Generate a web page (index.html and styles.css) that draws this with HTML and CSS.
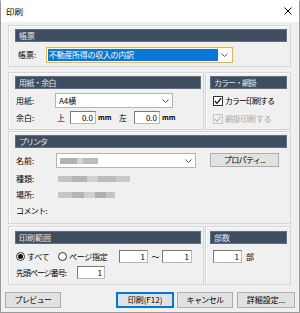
FILE: index.html
```html
<!DOCTYPE html>
<html lang="ja">
<head>
<meta charset="utf-8">
<title>印刷</title>
<link rel="stylesheet" href="styles.css">
</head>
<body>
<div class="window">
  <div class="titlebar">
    <span class="title">印刷</span>
    <svg class="close" width="8" height="8" viewBox="0 0 8 8"><path d="M0.5 0.5 L7.5 7.5 M7.5 0.5 L0.5 7.5" stroke="#000" stroke-width="1" fill="none"/></svg>
  </div>
  <div class="content">
    <section class="panel p-form">
      <div class="hdr">帳票</div>
      <div class="row r-form">
        <span class="lbl l-form">帳票:</span>
        <div class="combo focus">
          <span class="sel">不動産所得の収入の内訳</span>
          <span class="arrow"><svg width="7" height="4" viewBox="0 0 7 4"><path d="M0.5 0.5 L3.5 3.5 L6.5 0.5" stroke="#555" fill="none"/></svg></span>
        </div>
      </div>
    </section>

    <div class="pair r2">
      <section class="panel p-paper">
        <div class="hdr t-m">用紙・余白</div>
        <div class="row r-paper">
          <span class="lbl l-paper">用紙:</span>
          <div class="combo c-paper">
            <span class="val">A4横</span>
            <span class="arrow"><svg width="7" height="4" viewBox="0 0 7 4"><path d="M0.5 0.5 L3.5 3.5 L6.5 0.5" stroke="#555" fill="none"/></svg></span>
          </div>
        </div>
        <div class="row r-margin">
          <span class="lbl l-paper">余白:</span>
          <span class="side s-top">上</span>
          <span class="num n-margin">0.0</span>
          <span class="unit">mm</span>
          <span class="side s-left">左</span>
          <span class="num n-margin n-left">0.0</span>
          <span class="unit">mm</span>
        </div>
      </section>
      <section class="panel p-side">
        <div class="hdr hdr-side t-l">カラー・網掛</div>
        <div class="chk c1">
          <span class="box"><svg width="8" height="8" viewBox="0 0 8 8"><path d="M0.8 4 L3 6.3 L7.2 1.2" stroke="#000" stroke-width="1.1" fill="none"/></svg></span>
          <span class="t-l">カラー印刷する</span>
        </div>
        <div class="chk c2 disabled">
          <span class="box"><svg width="8" height="8" viewBox="0 0 8 8"><path d="M0.8 4 L3 6.3 L7.2 1.2" stroke="#bcbcbc" stroke-width="1.1" fill="none"/></svg></span>
          <span class="t-s">網掛印刷する</span>
        </div>
      </section>
    </div>

    <section class="panel p-printer">
      <div class="hdr t-l">プリンタ</div>
      <div class="row r-name">
        <span class="lbl l-info">名前:</span>
        <div class="combo c-name">
          <span class="val"><span class="blur b-name"></span></span>
          <span class="arrow"><svg width="7" height="4" viewBox="0 0 7 4"><path d="M0.5 0.5 L3.5 3.5 L6.5 0.5" stroke="#555" fill="none"/></svg></span>
        </div>
        <button class="btn b-prop t-m">プロパティ...</button>
      </div>
      <div class="row r-info r-first">
        <span class="lbl l-val">種類:</span>
        <span class="blur b-kind"></span>
      </div>
      <div class="row r-info">
        <span class="lbl l-val">場所:</span>
        <span class="blur b-place"></span>
      </div>
      <div class="row r-info">
        <span class="lbl l-val t-m">コメント:</span>
      </div>
    </section>

    <div class="pair r4">
      <section class="panel p-range">
        <div class="hdr hdr-low">印刷範囲</div>
        <div class="row r-radio">
          <span class="radio on"></span>
          <span class="rtext t-all t-s">すべて</span>
          <span class="radio r-page"></span>
          <span class="rtext t-page t-s">ページ指定</span>
          <span class="num n-from">1</span>
          <span class="tilde">～</span>
          <span class="num n-to">1</span>
        </div>
        <div class="row r-start">
          <span class="lbl l-start t-l">先頭ページ番号:</span>
          <span class="num n-start">1</span>
        </div>
      </section>
      <section class="panel p-side">
        <div class="hdr hdr-side hdr-low">部数</div>
        <div class="row r-copies">
          <span class="num n-copies">1</span>
          <span class="unit-bu">部</span>
        </div>
      </section>
    </div>

    <div class="buttons">
      <button class="btn b-preview t-m">プレビュー</button>
      <button class="btn b-print">印刷(F12)</button>
      <button class="btn b-cancel t-m">キャンセル</button>
      <button class="btn b-detail">詳細設定...</button>
    </div>
  </div>
</div>
</body>
</html>
```

FILE: styles.css
```css
* { box-sizing: border-box; }
html, body { margin: 0; padding: 0; }
body {
  width: 300px;
  height: 313px;
  overflow: hidden;
  font-family: "Noto Sans CJK JP", "Noto Sans", sans-serif;
  font-size: 8px;
  line-height: 1;
  color: #000;
  background: #fff;
  white-space: nowrap;
}
.t-s { letter-spacing: -0.3px; }
.t-m { letter-spacing: -0.6px; }
.t-l { letter-spacing: -1px; }

.window {
  width: 300px;
  height: 313px;
  border: 1px solid #9a9a9a;
  border-top-color: #ffffff;
  background: #f0f0f0;
  display: flex;
  flex-direction: column;
}
.titlebar {
  height: 21px;
  flex: none;
  background: #fff;
  display: flex;
  align-items: center;
  justify-content: space-between;
  padding: 0 7px 1px 5px;
}
.title { font-size: 8.5px; }
.close { display: block; }

.content {
  display: flex;
  flex-direction: column;
  padding: 3px 8px 0 7px;
}
.panel {
  border: 1px solid #d6d6d6;
  box-shadow: inset 1px 1px 0 #ffffff;
  display: flex;
  flex-direction: column;
}
.hdr {
  height: 13px;
  margin: 3px 3px 0 6px;
  background: #3e4e60;
  border: 1px solid #617080;
  color: #e4e8ec;
  padding-left: 3px;
  display: flex;
  align-items: center;
  flex: none;
}
.hdr-side { margin-left: 4px; }
.hdr-low { margin-top: 4px; }

.p-form { height: 42px; }
.pair { display: flex; gap: 1px; }
.r2 { height: 58px; margin-top: 5px; }
.r4 { height: 59px; margin-top: 2px; }
.p-paper, .p-range { width: 196px; }
.p-paper .hdr, .p-range .hdr { margin-right: 2px; }
.p-side { width: 86px; }
.p-printer { height: 93px; margin-top: 1px; }

.row { display: flex; align-items: center; flex: none; }
.lbl { flex: none; }

/* form row */
.r-form { height: 16px; margin-top: 5px; }
.l-form { margin-left: 9px; width: 28px; }
.combo {
  display: flex;
  background: #fff;
  border: 1px solid #b4b4b4;
  height: 100%;
}
.combo.focus {
  width: 187px;
  border-color: #eab83c;
  padding: 1px;
}
.sel {
  flex: 1;
  background: #0a77d6;
  color: #fff;
  display: flex;
  align-items: center;
  padding-left: 1px;
  letter-spacing: -0.3px;
}
.val {
  flex: 1;
  display: flex;
  align-items: center;
  padding-left: 3px;
}
.arrow {
  width: 13px;
  flex: none;
  display: flex;
  align-items: center;
  justify-content: center;
}
.arrow svg { display: block; }

/* paper panel */
.r-paper { height: 15px; margin-top: 4px; }
.l-paper { margin-left: 7px; width: 39px; }
.c-paper { width: 118px; }
.r-margin { height: 13px; margin-top: 3px; }
.side { width: 9px; flex: none; }
.s-top { margin-left: 2px; }
.s-left { margin-left: 9px; }
.num {
  flex: none;
  height: 13px;
  background: #fff;
  border: 1px solid #7a7a7a;
  border-right-color: #b9b9b9;
  border-bottom-color: #b9b9b9;
  display: flex;
  align-items: center;
  justify-content: flex-end;
  padding-right: 2px;
  font-size: 8px;
}
.n-margin { width: 26px; margin-left: 4px; }
.n-left { margin-left: 6px; }
.unit { width: 12px; margin-left: 2px; font-size: 7px; font-weight: bold; flex: none; }

/* checkboxes */
.chk { display: flex; align-items: center; height: 12px; margin-left: 7px; flex: none; }
.c1 { margin-top: 6px; }
.c2 { margin-top: 6px; }
.box {
  width: 10px;
  height: 10px;
  border: 1px solid #333;
  background: #fff;
  margin-right: 2px;
  display: flex;
  align-items: center;
  justify-content: center;
  flex: none;
}
.box svg { display: block; }
.disabled { color: #a8a8a8; }
.disabled .box { border-color: #c6c6c6; background: #f0f0f0; }

/* printer panel */
.r-name { height: 15px; margin-top: 5px; align-items: flex-start; }
.l-info { margin-left: 7px; width: 40px; align-self: center; }
.c-name { width: 140px; }
.btn {
  font-family: inherit;
  font-size: 8px;
  line-height: 1;
  color: #000;
  background: #e1e1e1;
  border: 1px solid #adadad;
  padding: 0;
  margin: 0;
  display: flex;
  align-items: center;
  justify-content: center;
  flex: none;
  white-space: nowrap;
}
.b-prop { width: 69px; height: 14px; margin-left: 14px; }
.r-info { height: 16px; }
.r-first { margin-top: 3px; }
.l-val { margin-left: 7px; width: 42px; }
.blur {
  display: inline-block;
  height: 6px;
  filter: blur(0.7px);
  flex: none;
}
.b-name {
  width: 38px;
  background: linear-gradient(90deg, #b2b2b2 0 45%, #d4d4d4 45% 60%, #bdbdbd 60% 100%);
}
.b-kind {
  width: 72px;
  background: linear-gradient(90deg, #c4c4c4 0 20%, #b6b6b6 20% 40%, #d0d0d0 40% 55%, #bcbcbc 55% 80%, #c8c8c8 80% 100%);
}
.b-place {
  width: 57px;
  background: linear-gradient(90deg, #c6c6c6 0 25%, #b4b4b4 25% 45%, #cfcfcf 45% 65%, #b0b0b0 65% 85%, #c4c4c4 85% 100%);
}

/* range panel */
.r-radio { height: 13px; margin-top: 6px; }
.radio {
  width: 9px;
  height: 9px;
  border-radius: 50%;
  border: 1px solid #333;
  background: #fff;
  margin-left: 7px;
  flex: none;
  display: flex;
  align-items: center;
  justify-content: center;
}
.radio.on::after {
  content: "";
  width: 5px;
  height: 5px;
  border-radius: 50%;
  background: #111;
}
.rtext { margin-left: 2px; flex: none; }
.t-all { width: 24px; }
.t-page { width: 36px; }
.n-from { width: 29px; margin-left: 14px; }
.tilde { width: 13px; margin-left: 1px; text-align: center; flex: none; }
.n-to { width: 30px; }
.r-start { height: 13px; margin-top: 3px; }
.l-start { margin-left: 7px; width: 61px; }
.n-start { width: 28px; }
.r-copies { height: 13px; margin-top: 6px; }
.n-copies { width: 29px; margin-left: 7px; }
.unit-bu { margin-left: 4px; flex: none; }

/* bottom buttons */
.buttons {
  display: flex;
  height: 16px;
  margin: 7px -4px 0 -3px;
}
.buttons .btn { height: 16px; }
.b-preview { width: 56px; }
.b-print { width: 58px; margin-left: 55px; border-color: #0078d7; box-shadow: inset 0 0 0 1px #0078d7; }
.b-cancel { width: 56px; margin-left: 3px; }
.b-detail { width: 58px; margin-left: 4px; }
```
